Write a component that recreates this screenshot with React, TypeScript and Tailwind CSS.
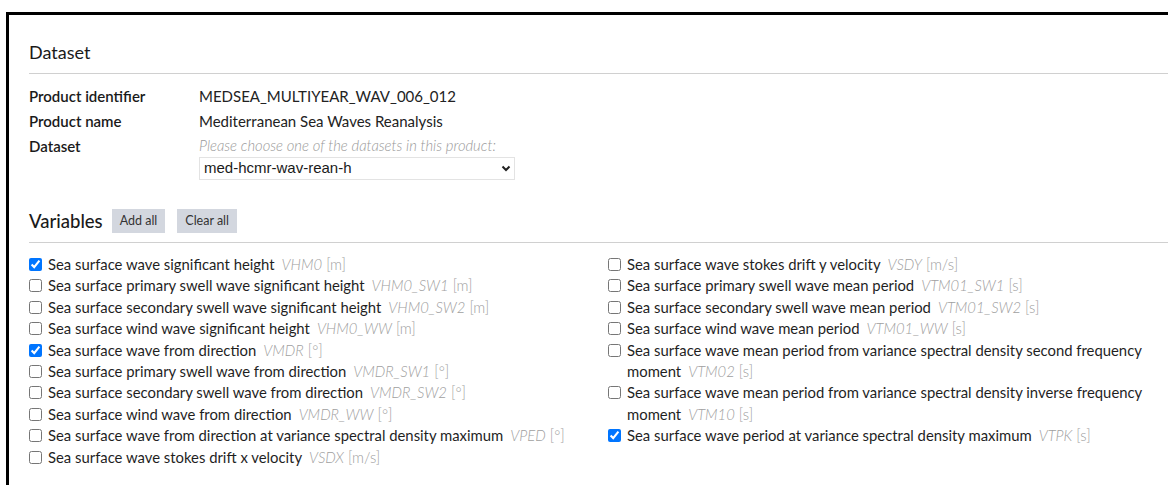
import React from 'react';

type Variable = { label: string; code: string; unit: string; checked?: boolean };

const leftVars: Variable[] = [
  { label: 'Sea surface wave significant height', code: 'VHM0', unit: '[m]', checked: true },
  { label: 'Sea surface primary swell wave significant height', code: 'VHM0_SW1', unit: '[m]' },
  { label: 'Sea surface secondary swell wave significant height', code: 'VHM0_SW2', unit: '[m]' },
  { label: 'Sea surface wind wave significant height', code: 'VHM0_WW', unit: '[m]' },
  { label: 'Sea surface wave from direction', code: 'VMDR', unit: '[°]', checked: true },
  { label: 'Sea surface primary swell wave from direction', code: 'VMDR_SW1', unit: '[°]' },
  { label: 'Sea surface secondary swell wave from direction', code: 'VMDR_SW2', unit: '[°]' },
  { label: 'Sea surface wind wave from direction', code: 'VMDR_WW', unit: '[°]' },
  { label: 'Sea surface wave from direction at variance spectral density maximum', code: 'VPED', unit: '[°]' },
  { label: 'Sea surface wave stokes drift x velocity', code: 'VSDX', unit: '[m/s]' },
];

const rightVars: Variable[] = [
  { label: 'Sea surface wave stokes drift y velocity', code: 'VSDY', unit: '[m/s]' },
  { label: 'Sea surface primary swell wave mean period', code: 'VTM01_SW1', unit: '[s]' },
  { label: 'Sea surface secondary swell wave mean period', code: 'VTM01_SW2', unit: '[s]' },
  { label: 'Sea surface wind wave mean period', code: 'VTM01_WW', unit: '[s]' },
  { label: 'Sea surface wave mean period from variance spectral density second frequency moment', code: 'VTM02', unit: '[s]' },
  { label: 'Sea surface wave mean period from variance spectral density inverse frequency moment', code: 'VTM10', unit: '[s]' },
  { label: 'Sea surface wave period at variance spectral density maximum', code: 'VTPK', unit: '[s]', checked: true },
];

const VariableItem: React.FC<Variable> = ({ label, code, unit, checked }) => (
  <label className="flex items-start leading-[21.4px]">
    <input
      type="checkbox"
      defaultChecked={checked}
      className="mt-[4px] ml-0 mr-[6px] h-[13px] w-[13px] shrink-0 accent-[#0075ff]"
    />
    <span className="text-[#1f1f1f]">
      {label}
      <span className="ml-[7px] font-light text-[#a0a0a0]">
        <i>{code}</i> {unit}
      </span>
    </span>
  </label>
);

const InfoRow: React.FC<{ label: string; children: React.ReactNode }> = ({ label, children }) => (
  <div className="flex">
    <div className="w-[170px] shrink-0 font-semibold text-[#1a1a1a] leading-[25px]">{label}</div>
    <div className="text-[#222]">{children}</div>
  </div>
);

export default function App() {
  return (
    <div className="h-[485px] w-full overflow-hidden bg-white" style={{ fontFamily: 'Lato, "Open Sans", sans-serif' }}>
      <div className="ml-[6px] mt-[12px] h-[600px] w-[1300px] border-l-[3px] border-t-[3px] border-black pl-[20px] pt-[25px]">
        <h2 className="border-b border-[#d0d0d0] pb-[9px] text-[18px] leading-[24px] text-[#1a1a1a]">Dataset</h2>

        <div className="mt-[10px] text-[15px]">
          <InfoRow label="Product identifier">
            <span className="leading-[25px]">MEDSEA_MULTIYEAR_WAV_006_012</span>
          </InfoRow>
          <InfoRow label="Product name">
            <span className="leading-[25px]">Mediterranean Sea Waves Reanalysis</span>
          </InfoRow>
          <InfoRow label="Dataset">
            <div className="flex flex-col">
              <span className="text-[14.8px] italic font-light leading-[23px] text-[#9a9a9a]">
                Please choose one of the datasets in this product:
              </span>
              <div className="flex h-[23px] w-[316px] items-center justify-between border border-[#e3e3e3] pl-[4px] pr-[3px]">
                <span className="text-[15px] text-[#1a1a1a]" style={{ fontFamily: '"Liberation Sans", Arial, sans-serif' }}>
                  med-hcmr-wav-rean-h
                </span>
                <svg width="10" height="7" viewBox="0 0 10 7">
                  <path d="M1.5 1.5 L5 5 L8.5 1.5" fill="none" stroke="#222" strokeWidth="2" />
                </svg>
              </div>
            </div>
          </InfoRow>
        </div>

        <div className="mt-[29px] flex items-center border-b border-[#d0d0d0] pb-[9px]">
          <h2 className="text-[18.5px] font-medium leading-[24px] text-[#1a1a1a]">Variables</h2>
          <button className="ml-[9px] h-[24px] bg-[#d3d7df] px-[8px] text-[12.5px] text-[#333]">Add all</button>
          <button className="ml-[12px] h-[24px] bg-[#d3d7df] px-[8px] text-[12.5px] text-[#333]">Clear all</button>
        </div>

        <div className="mt-[11px] grid w-[1158px] grid-cols-2 text-[14.85px]">
          <div>
            {leftVars.map((v) => (
              <VariableItem key={v.code} {...v} />
            ))}
          </div>
          <div>
            {rightVars.map((v) => (
              <VariableItem key={v.code} {...v} />
            ))}
          </div>
        </div>
      </div>
    </div>
  );
}
